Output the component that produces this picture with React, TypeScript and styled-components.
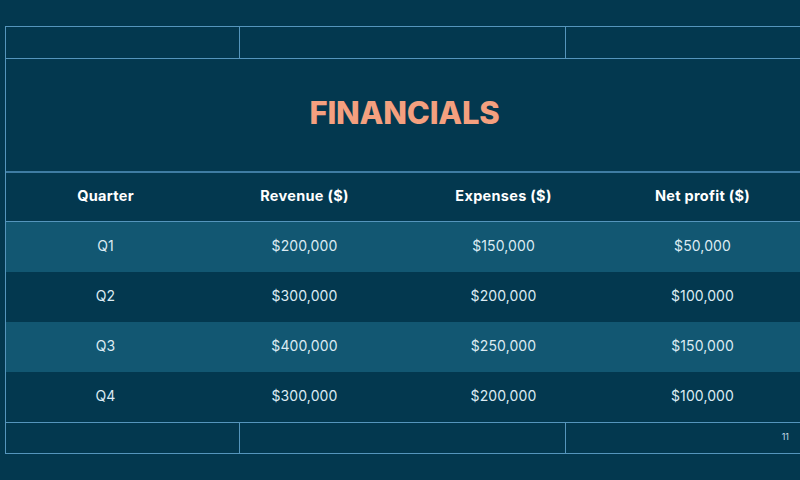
import React from 'react';
import styled, { createGlobalStyle } from 'styled-components';

const COLORS = {
  background: '#03384f',
  stripe: '#125772',
  line: '#5595bc',
  lineDim: '#3f7ca3',
  title: '#f4a07f',
  heading: '#ffffff',
  cell: '#dcebf3',
  pageNo: '#c6dbe7',
};

const GlobalStyle = createGlobalStyle`
  html, body {
    margin: 0;
    padding: 0;
    width: 800px;
    height: 480px;
    overflow: hidden;
    background: ${COLORS.background};
    font-family: Inter, "Open Sans", "DejaVu Sans", sans-serif;
  }
`;

const Slide = styled.div`
  width: 800px;
  height: 480px;
  padding: 26px 0 0 5px;
  box-sizing: border-box;
  overflow: hidden;
  background: ${COLORS.background};
`;

const Frame = styled.div`
  width: 797px;
  border-top: 1px solid ${COLORS.line};
  border-bottom: 1px solid ${COLORS.line};
  border-left: 1px solid ${COLORS.line};
`;

const Strip = styled.div<{ $height: number; $top?: boolean }>`
  display: grid;
  grid-template-columns: 233px 326px 1fr;
  height: ${({ $height }) => $height}px;
  box-sizing: content-box;
  ${({ $top }) =>
    $top
      ? `border-bottom: 1px solid ${COLORS.line};`
      : `border-top: 1px solid ${COLORS.line};`}
`;

const StripCell = styled.div<{ $divider?: boolean }>`
  display: flex;
  align-items: center;
  justify-content: flex-end;
  padding-right: 14px;
  border-left: ${({ $divider }) =>
    $divider ? `1px solid ${COLORS.line}` : 'none'};
`;

const PageNumber = styled.span`
  font-size: 9px;
  color: ${COLORS.pageNo};
  margin-top: -3px;
`;

const TitleBox = styled.div`
  height: 112px;
  box-sizing: border-box;
  display: flex;
  align-items: center;
  justify-content: center;
  padding: 0 0 6px 0;
`;

const Title = styled.h1`
  margin: 0;
  font-size: 31px;
  font-weight: 800;
  letter-spacing: -0.2px;
  color: ${COLORS.title};
`;

const Table = styled.div`
  display: flex;
  flex-direction: column;
`;

const HeaderRow = styled.div`
  display: grid;
  grid-template-columns: repeat(4, 199px);
  height: 48px;
  border-top: 2px solid ${COLORS.lineDim};
  border-bottom: 1px solid ${COLORS.line};
`;

const Row = styled.div<{ $striped: boolean }>`
  display: grid;
  grid-template-columns: repeat(4, 199px);
  height: 50px;
  background: ${({ $striped }) =>
    $striped ? COLORS.stripe : COLORS.background};
`;

const HeadCell = styled.div`
  display: flex;
  align-items: center;
  justify-content: center;
  padding-bottom: 4px;
  font-size: 14.5px;
  font-weight: 700;
  letter-spacing: 0.3px;
  color: ${COLORS.heading};
`;

const Cell = styled.div`
  display: flex;
  align-items: center;
  justify-content: center;
  padding-bottom: 3px;
  font-size: 14px;
  font-weight: 400;
  letter-spacing: 0.1px;
  color: ${COLORS.cell};
`;

const columns = ['Quarter', 'Revenue ($)', 'Expenses ($)', 'Net profit ($)'];

const rows = [
  ['Q1', '$200,000', '$150,000', '$50,000'],
  ['Q2', '$300,000', '$200,000', '$100,000'],
  ['Q3', '$400,000', '$250,000', '$150,000'],
  ['Q4', '$300,000', '$200,000', '$100,000'],
];

const App = () => {
  return (
    <>
      <GlobalStyle />
      <Slide>
        <Frame>
          <Strip $height={31} $top>
            <StripCell />
            <StripCell $divider />
            <StripCell $divider />
          </Strip>
          <TitleBox>
            <Title>FINANCIALS</Title>
          </TitleBox>
          <Table>
            <HeaderRow>
              {columns.map((c) => (
                <HeadCell key={c}>{c}</HeadCell>
              ))}
            </HeaderRow>
            {rows.map((r, i) => (
              <Row key={r[0]} $striped={i % 2 === 0}>
                {r.map((v, j) => (
                  <Cell key={j}>{v}</Cell>
                ))}
              </Row>
            ))}
          </Table>
          <Strip $height={30}>
            <StripCell />
            <StripCell $divider />
            <StripCell $divider>
              <PageNumber>11</PageNumber>
            </StripCell>
          </Strip>
        </Frame>
      </Slide>
    </>
  );
};

export default App;
